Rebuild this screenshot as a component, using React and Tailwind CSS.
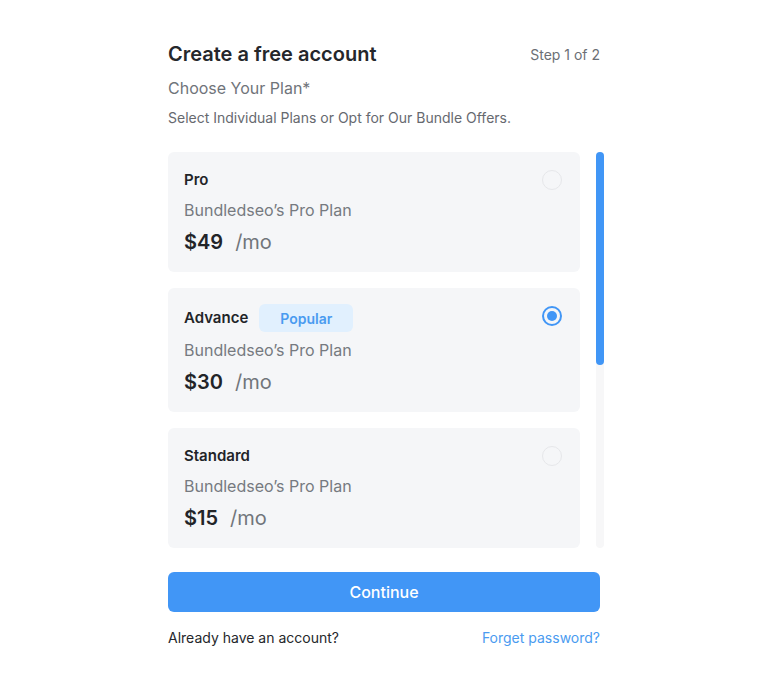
import React from "react";

const plans = [
  { name: "Pro", price: "$49", popular: false, checked: false },
  { name: "Advance", price: "$30", popular: true, checked: true },
  { name: "Standard", price: "$15", popular: false, checked: false },
];

function Radio({ checked }) {
  if (checked) {
    return (
      <div className="w-5 h-5 mr-[2px] -mt-1 rounded-full border-2 border-[#4196f6] flex items-center justify-center">
        <div className="w-[10px] h-[10px] rounded-full bg-[#4196f6]" />
      </div>
    );
  }
  return <div className="w-5 h-5 mr-[2px] rounded-full border-[1.5px] border-[#e6e7ea]" />;
}

function Card({ plan }) {
  return (
    <div className="shrink-0 bg-[#f5f6f8] rounded-md px-4 pt-4 pb-4 flex flex-col gap-[6px]">
      <div className={`flex items-center justify-between ${plan.popular ? "h-7" : "h-6"}`}>
        <div className="flex items-center gap-[11px]">
          <span className="text-[15px] font-semibold text-[#222428]">{plan.name}</span>
          {plan.popular && (
            <span className="h-7 px-[21px] flex items-center rounded-md bg-[#e1f0fe] text-[#4a9bf0] text-[14px] font-semibold">
              Popular
            </span>
          )}
        </div>
        <Radio checked={plan.checked} />
      </div>
      <div className="text-[16px] leading-6 text-[#767a80]">Bundledseo’s Pro Plan</div>
      <div className="flex items-baseline gap-3 h-7 leading-7">
        <span className="text-[20px] font-semibold text-[#222428]">{plan.price}</span>
        <span className="text-[20px] text-[#71757b]">/mo</span>
      </div>
    </div>
  );
}

export default function App() {
  return (
    <div className="w-[768px] h-[688px] bg-white flex justify-center" style={{ fontFamily: "Inter, 'Noto Sans', sans-serif" }}>
      <div className="w-[432px] pt-10 flex flex-col">
        <div className="flex items-center justify-between h-7">
          <h1 className="text-[20px] font-semibold text-[#25272b]">Create a free account</h1>
          <span className="text-[14px] text-[#6b6f75]">Step 1 of 2</span>
        </div>
        <div className="mt-2 text-[16px] leading-6 text-[#70747a]">Choose Your Plan*</div>
        <div className="mt-2 text-[14px] leading-5 text-[#66696f]">Select Individual Plans or Opt for Our Bundle Offers.</div>
        <div className="mt-6 flex gap-4 w-[436px]">
          <div className="w-[412px] h-[396px] overflow-hidden flex flex-col gap-4">
            {plans.map((p) => (
              <Card key={p.name} plan={p} />
            ))}
          </div>
          <div className="w-2 h-[396px] bg-[#f7f7f8] rounded-sm">
            <div className="w-2 h-[213px] bg-[#4196f6] rounded-full" />
          </div>
        </div>
        <button className="mt-6 h-10 w-[432px] rounded-md bg-[#4196f6] text-white text-[16px] font-medium">
          Continue
        </button>
        <div className="mt-4 flex items-center justify-between text-[14px] leading-5">
          <span className="text-[#25272b]">Already have an account?</span>
          <span className="text-[#4a9bf0]">Forget password?</span>
        </div>
      </div>
    </div>
  );
}
